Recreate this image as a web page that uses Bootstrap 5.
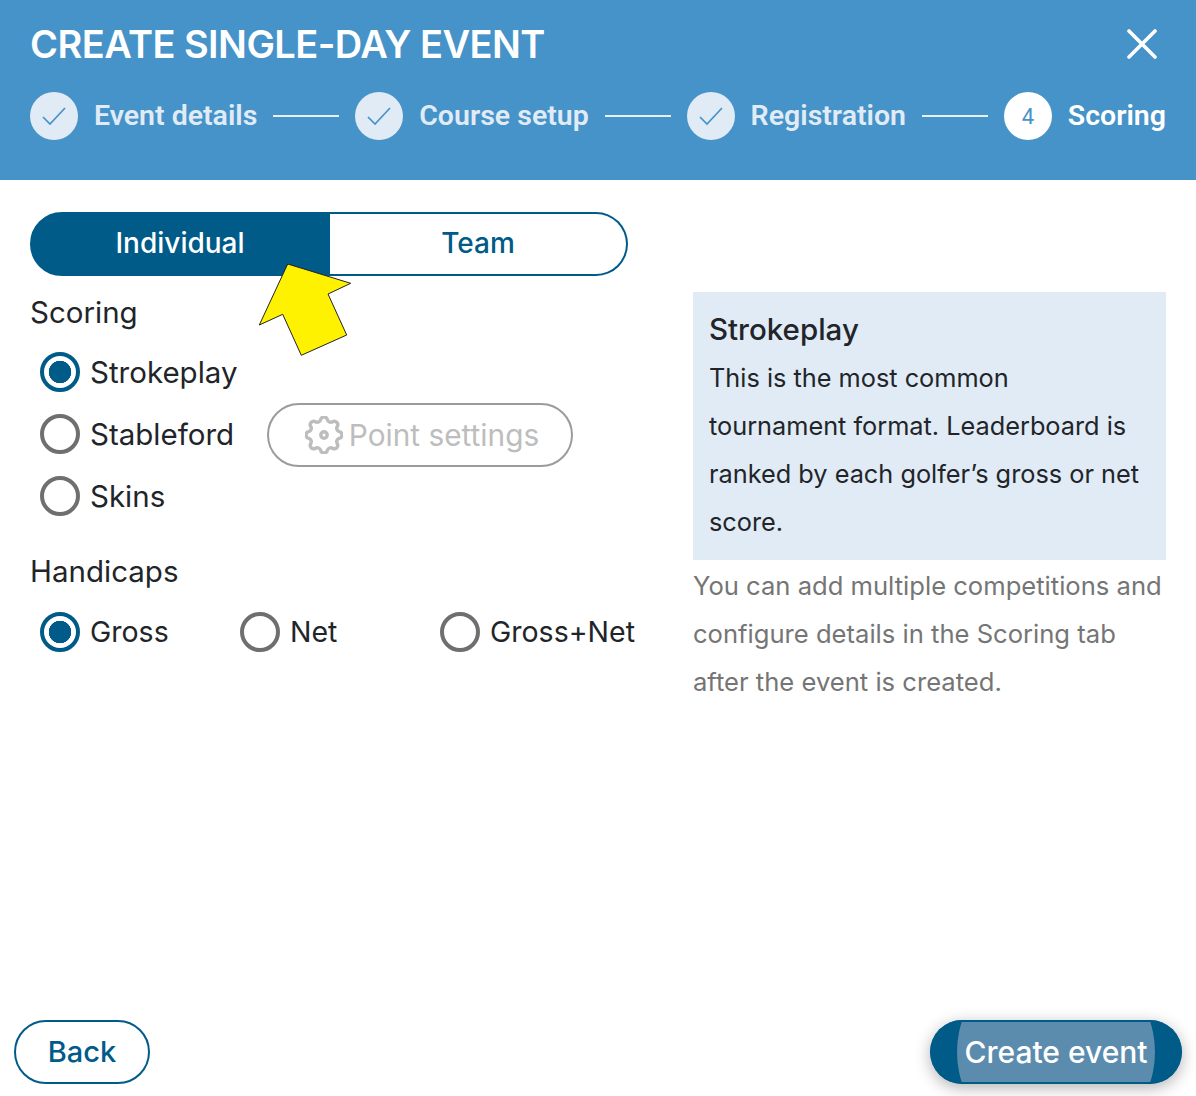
<!DOCTYPE html>
<html lang="en">
<head>
    <meta charset="UTF-8">
    <title>Create single-day event</title>
    <link href="https://cdn.jsdelivr.net/npm/bootstrap@5.3.3/dist/css/bootstrap.min.css" rel="stylesheet">
    <style>
        html, body { height: 100%; }
        body {
            font-family: Inter, "Open Sans", sans-serif;
            color: #212529;
            overflow: hidden;
        }
        .wizard-page { height: 1096px; position: relative; }
        .wizard-head { background: #4593c8; height: 180px; padding: 20px 30px 0; color: #fff; }
        .wizard-title { font-size: 38px; line-height: 48px; font-weight: 600; margin: 0; letter-spacing: -0.55px; }
        .close-x { width: 30px; height: 30px; margin-top: 9px; margin-right: 9px; padding: 0; border: 0; background: none; }
        .stepper { margin-top: 24px; height: 48px; gap: 16px; font-family: Roboto, sans-serif; font-weight: 600; font-size: 28.5px; color: #e1ebf5; white-space: nowrap; }
        .step-dot { width: 48px; height: 48px; border-radius: 50%; background: #e1ebf5; color: #4593c8; font-size: 22px; font-weight: 400; }
        .step-dot.is-current { background: #fff; }
        .step-line { width: 66px; height: 2px; background: #e8f0f7; }
        .step-now { color: #fff; }
        .wizard-body { padding: 32px 30px 0; }
        .left-col { width: 663px; flex: none; }
        .right-col { width: 473px; flex: none; padding-top: 80px; }
        .mode-group { width: 598px; height: 64px; }
        .mode-group .btn { font-size: 28px; font-weight: 500; height: 64px; border: 2px solid #005b88; padding: 0 0 2px; }
        .mode-on { background: #005b88; color: #fff; border-radius: 32px 0 0 32px; width: 300px; flex: none; }
        .mode-on:hover { background: #005b88; color: #fff; }
        .mode-off { background: #fff; color: #005b88; border-left: 0 !important; border-radius: 0 32px 32px 0; flex: 1; }
        .field-label { font-size: 29.5px; line-height: 40px; margin: 16px 0 0; }
        .field-label.is-second { margin-top: 24px; }
        .choice-list { margin-top: 9px; }
        .choice-row { height: 62px; padding-left: 10px; }
        .choice-item { display: flex; align-items: center; gap: 10px; margin: 0; padding: 0; min-height: 0; font-size: 29.5px; line-height: 40px; white-space: nowrap; }
        .choice-row .choice-item { width: 195px; flex: none; }
        .choice-item .form-check-input {
            width: 40px; height: 40px; margin: 0; float: none; flex: none;
            border: 4px solid #6f6f6f; background-color: #fff;
        }
        .choice-item .form-check-input:checked {
            border-color: #005b88; background-color: #fff;
            background-image: radial-gradient(circle, #005b88 0 11px, transparent 11.5px);
        }
        .point-btn {
            width: 306px; height: 64px; margin: 2px 0 0 32px; padding: 0 0 0 4px; gap: 6px;
            border: 2px solid #9b9b9b; border-radius: 32px; background: #fff; color: #bdbdbd; font-size: 29.8px;
        }
        .point-btn:disabled { border-color: #9b9b9b; background: #fff; color: #bdbdbd; opacity: 1; }
        .handicap-row { margin-top: 21px; height: 40px; padding-left: 10px; }
        .handicap-cell { width: 200px; flex: none; white-space: nowrap; }
        .handicap-cell .choice-item { font-size: 28.5px; }
        .info-box { background: #e1ebf5; height: 268px; padding: 16px 22px 16px 16px; font-size: 25.3px; line-height: 48px; }
        .info-title { font-size: 29.5px; line-height: 42px; font-weight: 500; margin: 0 0 4px; }
        .info-note { color: #757575; font-size: 25.6px; line-height: 48px; margin: 2px 0 0; white-space: nowrap; }
        .info-box p { margin: 0; }
        .wizard-foot { position: absolute; left: 14px; right: 14px; bottom: 12px; }
        .back-btn {
            width: 136px; height: 64px; padding: 0; border: 2px solid #005b88; border-radius: 32px;
            background: #fff; color: #005b88; font-size: 29px; font-weight: 500;
        }
        .create-btn {
            position: relative; overflow: hidden; width: 252px; height: 64px; padding: 0;
            border: 0; border-radius: 32px; background: #005b88; color: #fff; font-size: 30px; font-weight: 500;
            box-shadow: 0 4px 16px rgba(0, 0, 0, 0.3);
        }
        .create-btn:hover { background: #005b88; color: #fff; }
        .create-btn::before {
            content: ""; position: absolute; width: 198px; height: 198px; left: 27px; top: -67px;
            border-radius: 50%; background: #5b8cae;
        }
        .create-btn::after {
            content: ""; position: absolute; left: 0; right: 0; top: 0; bottom: 0;
            border: 2px solid #005b88; border-radius: 32px;
        }
        .create-btn span { position: relative; z-index: 1; }
        .pointer-arrow { position: absolute; left: 256px; top: 260px; }
    </style>
</head>
<body>
    <div class="wizard-page">
        <div class="wizard-head">
            <div class="d-flex justify-content-between align-items-start">
                <h1 class="wizard-title">CREATE SINGLE-DAY EVENT</h1>
                <button class="close-x" type="button" aria-label="Close">
                    <svg width="30" height="30" viewBox="0 0 30 30"><path d="M2 2 28 28M28 2 2 28" stroke="#fff" stroke-width="3.6" stroke-linecap="round" fill="none"/></svg>
                </button>
            </div>
            <div class="stepper d-flex align-items-center">
                <span class="step-dot d-flex align-items-center justify-content-center"><svg width="24" height="20" viewBox="0 0 24 20"><path d="M1 11 8 18 23 2" stroke="#4593c8" stroke-width="1.7" fill="none"/></svg></span>
                <span>Event details</span>
                <span class="step-line"></span>
                <span class="step-dot d-flex align-items-center justify-content-center"><svg width="24" height="20" viewBox="0 0 24 20"><path d="M1 11 8 18 23 2" stroke="#4593c8" stroke-width="1.7" fill="none"/></svg></span>
                <span>Course setup</span>
                <span class="step-line"></span>
                <span class="step-dot d-flex align-items-center justify-content-center"><svg width="24" height="20" viewBox="0 0 24 20"><path d="M1 11 8 18 23 2" stroke="#4593c8" stroke-width="1.7" fill="none"/></svg></span>
                <span>Registration</span>
                <span class="step-line"></span>
                <span class="step-dot is-current d-flex align-items-center justify-content-center">4</span>
                <span class="step-now">Scoring</span>
            </div>
        </div>

        <div class="wizard-body d-flex">
            <div class="left-col">
                <div class="mode-group d-flex">
                    <button class="btn mode-on" type="button">Individual</button>
                    <button class="btn mode-off" type="button">Team</button>
                </div>
                <div class="field-label">Scoring</div>
                <div class="choice-list">
                    <div class="choice-row d-flex align-items-center">
                        <label class="form-check choice-item"><input class="form-check-input" type="radio" name="scoring" checked>Strokeplay</label>
                    </div>
                    <div class="choice-row d-flex align-items-center">
                        <label class="form-check choice-item"><input class="form-check-input" type="radio" name="scoring">Stableford</label>
                        <button class="btn point-btn d-flex align-items-center justify-content-center" type="button" disabled>
                            <svg width="38" height="38" viewBox="2.5 2.5 19 19" fill="none" stroke="#bdbdbd" stroke-width="1.7"><path d="M10.325 4.317c.426-1.756 2.924-1.756 3.35 0a1.724 1.724 0 0 0 2.573 1.066c1.543-.94 3.31.826 2.37 2.37a1.724 1.724 0 0 0 1.065 2.572c1.756.426 1.756 2.924 0 3.35a1.724 1.724 0 0 0-1.066 2.573c.94 1.543-.826 3.31-2.37 2.37a1.724 1.724 0 0 0-2.572 1.065c-.426 1.756-2.924 1.756-3.35 0a1.724 1.724 0 0 0-2.573-1.066c-1.543.94-3.31-.826-2.37-2.37a1.724 1.724 0 0 0-1.065-2.572c-1.756-.426-1.756-2.924 0-3.35a1.724 1.724 0 0 0 1.066-2.573c-.94-1.543.826-3.31 2.37-2.37c1 .608 2.296.07 2.572-1.065z"/><circle cx="12" cy="12" r="1.6"/></svg>
                            Point settings
                        </button>
                    </div>
                    <div class="choice-row d-flex align-items-center">
                        <label class="form-check choice-item"><input class="form-check-input" type="radio" name="scoring">Skins</label>
                    </div>
                </div>
                <div class="field-label is-second">Handicaps</div>
                <div class="handicap-row d-flex">
                    <div class="handicap-cell"><label class="form-check choice-item"><input class="form-check-input" type="radio" name="handicap" checked>Gross</label></div>
                    <div class="handicap-cell"><label class="form-check choice-item"><input class="form-check-input" type="radio" name="handicap">Net</label></div>
                    <div class="handicap-cell"><label class="form-check choice-item"><input class="form-check-input" type="radio" name="handicap">Gross+Net</label></div>
                </div>
            </div>
            <div class="right-col">
                <div class="info-box">
                    <h2 class="info-title">Strokeplay</h2>
                    <p>This is the most common tournament format. Leaderboard is ranked by each golfer’s gross or net score.</p>
                </div>
                <p class="info-note">You can add multiple competitions and<br>configure details in the Scoring tab<br>after the event is created.</p>
            </div>
        </div>

        <!-- yellow callout sits on top of the toggle -->
        <svg class="pointer-arrow" width="100" height="100" viewBox="0 0 100 100">
            <path d="M31.7 4 94.7 23.3 72 34 90.7 75 45.3 95.3 26.7 54.3 3.3 65Z" fill="#fff200" stroke="#222" stroke-width="1"/>
        </svg>

        <div class="wizard-foot d-flex justify-content-between">
            <button class="btn back-btn" type="button">Back</button>
            <button class="btn create-btn" type="button"><span>Create event</span></button>
        </div>
    </div>
    <script src="https://cdn.jsdelivr.net/npm/bootstrap@5.3.3/dist/js/bootstrap.bundle.min.js"></script>
</body>
</html>
